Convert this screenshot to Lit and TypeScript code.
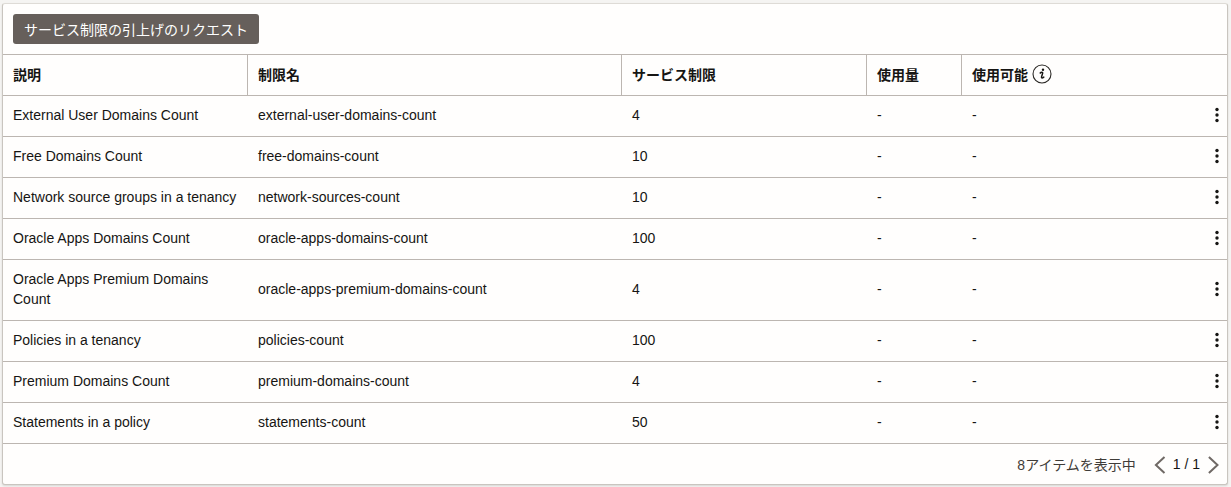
import { LitElement, html, css, svg } from "lit";
import { customElement } from "lit/decorators.js";

const rows = [
  ["External User Domains Count", "external-user-domains-count", "4"],
  ["Free Domains Count", "free-domains-count", "10"],
  ["Network source groups in a tenancy", "network-sources-count", "10"],
  ["Oracle Apps Domains Count", "oracle-apps-domains-count", "100"],
  ["Oracle Apps Premium Domains Count", "oracle-apps-premium-domains-count", "4"],
  ["Policies in a tenancy", "policies-count", "100"],
  ["Premium Domains Count", "premium-domains-count", "4"],
  ["Statements in a policy", "statements-count", "50"],
];

@customElement("app-root")
export class AppRoot extends LitElement {
  static styles = css`
    :host {
      display: block;
      width: 1231px;
      height: 487px;
      box-sizing: border-box;
      padding: 3px 3px 2px 2px;
      background: #f5f4f2;
      font-family: "Liberation Sans", "Noto Sans CJK JP", sans-serif;
      font-size: 14px;
      color: #161513;
    }
    .card {
      background: #fffefd;
      border: 1px solid #c9c5bf;
      border-top-color: #dedbd6;
      border-radius: 3px;
      height: 100%;
      box-sizing: border-box;
      display: flex;
      flex-direction: column;
      box-shadow: 0 1px 2px rgba(0, 0, 0, 0.12);
    }
    .toolbar {
      height: 51px;
      box-sizing: border-box;
      padding: 10px 10px 0;
      border-bottom: 1px solid #bcb6b1;
      flex: none;
    }
    .btn {
      display: inline-flex;
      align-items: center;
      height: 30px;
      padding: 0 11px;
      background: #665f5b;
      color: #fff;
      border: 0;
      border-radius: 3px;
      font: inherit;
      font-size: 14px;
    }
    table {
      border-collapse: separate;
      border-spacing: 0;
      table-layout: fixed;
      width: 100%;
      flex: none;
    }
    th {
      height: 41px;
      box-sizing: border-box;
      padding: 0 10px 2px;
      text-align: left;
      font-weight: 700;
      font-size: 14px;
      border-bottom: 1px solid #bcb6b1;
      border-right: 1px solid #bcb6b1;
    }
    th:last-child {
      border-right: 0;
    }
    td {
      height: 41px;
      box-sizing: border-box;
      padding: 0 10px 2px;
      line-height: 20px;
      border-bottom: 1px solid #bcb6b1;
    }
    tr.tall td {
      height: 61px;
    }
    .avail {
      display: flex;
      align-items: center;
      gap: 4px;
    }
    .info {
      display: block;
      width: 20px;
      height: 20px;
    }
    .menu {
      display: block;
      width: 4px;
      height: 16px;
      margin-left: auto;
      margin-right: -1.5px;
    }
    .footer {
      flex: 1;
      display: flex;
      align-items: center;
      justify-content: flex-end;
      padding: 0 8px 0 0;
      color: #3f3c38;
    }
    .count {
      margin-right: 18px;
    }
    .page {
      margin: 0 7px;
      color: #161513;
    }
    .chev {
      display: block;
      width: 12px;
      height: 18px;
      margin-top: 2px;
    }
  `;

  private chevron(left: boolean) {
    return html`<svg class="chev" viewBox="0 0 12 18" fill="none" stroke="#6f6965" stroke-width="2">
      ${svg`<path d=${left ? "M10.5 1 1.9 9l8.6 8" : "M1.9 1l8.6 8-8.6 8"} />`}
    </svg>`;
  }

  render() {
    return html`
      <div class="card">
        <div class="toolbar"><button class="btn">サービス制限の引上げのリクエスト</button></div>
        <table>
          <colgroup>
            <col style="width:245px" />
            <col style="width:374px" />
            <col style="width:245px" />
            <col style="width:95px" />
            <col />
          </colgroup>
          <thead>
            <tr>
              <th>説明</th>
              <th>制限名</th>
              <th>サービス制限</th>
              <th>使用量</th>
              <th>
                <div class="avail">
                  使用可能
                  <svg class="info" viewBox="0 0 20 20" fill="none">
                    <circle cx="10" cy="10" r="9" stroke="#2b2926" stroke-width="1.1" />
                    <circle cx="11" cy="5.8" r="1.2" fill="#161513" />
                    <path d="M7.8 9.4c.7-.8 1.4-1.2 2.1-1.2.7 0 .9.5.7 1.2l-1 3.3c-.2.8 0 1.2.6 1.2.7 0 1.4-.5 2-1.3" stroke="#161513" stroke-width="1.5" />
                  </svg>
                </div>
              </th>
            </tr>
          </thead>
          <tbody>
            ${rows.map(
              (r) => html`<tr class=${r[0].length > 30 && r[0].includes("Premium") ? "tall" : ""}>
                <td>${r[0]}</td>
                <td>${r[1]}</td>
                <td>${r[2]}</td>
                <td>-</td>
                <td>
                  <div class="avail">
                    -
                    <svg class="menu" viewBox="0 0 4 16" fill="#161513">
                      <circle cx="2" cy="2.5" r="1.7" />
                      <circle cx="2" cy="8" r="1.7" />
                      <circle cx="2" cy="13.5" r="1.7" />
                    </svg>
                  </div>
                </td>
              </tr>`
            )}
          </tbody>
        </table>
        <div class="footer">
          <span class="count">8アイテムを表示中</span>
          ${this.chevron(true)}
          <span class="page">1 / 1</span>
          ${this.chevron(false)}
        </div>
      </div>
    `;
  }
}
